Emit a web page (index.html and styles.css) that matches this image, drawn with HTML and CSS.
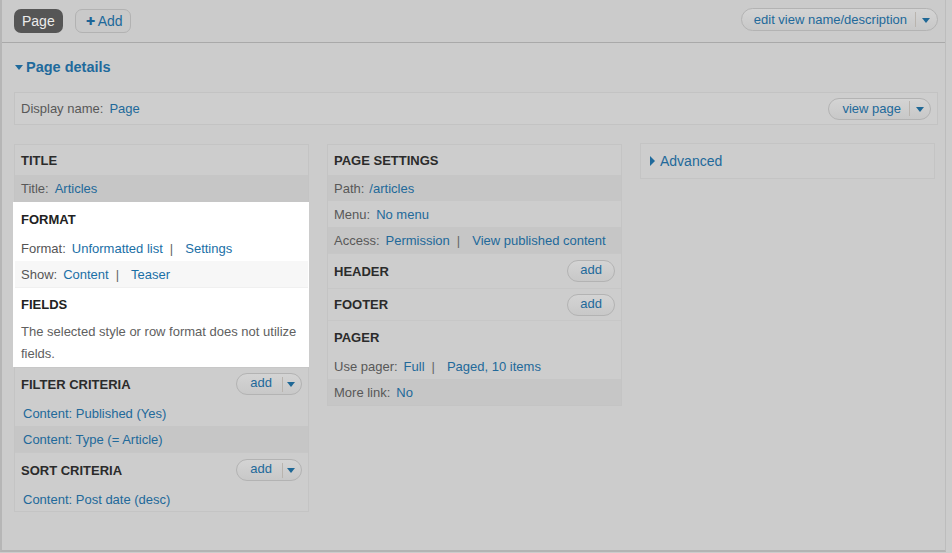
FILE: index.html
```html
<!DOCTYPE html>
<html>
<head>
<meta charset="utf-8">
<link rel="stylesheet" href="styles.css">
</head>
<body>
<div class="frame">
  <div class="topbar">
    <div class="tabs">
      <span class="tab-active">Page</span>
      <span class="tab-add"><span class="plus">✚</span>Add</span>
    </div>
    <span class="dropbtn wide"><span class="lbl">edit view name/description</span><span class="sep"></span><span class="arrow"></span></span>
  </div>

  <div class="content">
    <div class="details-title"><span class="tri-down"></span>Page details</div>

    <div class="display-bar">
      <span class="label">Display name:</span><a class="link">Page</a>
      <span class="dropbtn vp"><span class="lbl">view page</span><span class="sep"></span><span class="arrow"></span></span>
    </div>

    <div class="columns">
      <div class="panel col1">
        <div class="sec">
          <div class="hd h30">TITLE</div>
          <div class="row dark r27"><span class="label">Title:</span><a class="link">Articles</a></div>
        </div>
        <div class="hl">
          <div class="sec">
            <div class="hd">FORMAT</div>
            <div class="row"><span class="label">Format:</span><a class="link">Unformatted list</a><span class="pipe">|</span><a class="link">Settings</a></div>
            <div class="row alt"><span class="label">Show:</span><a class="link">Content</a><span class="pipe">|</span><a class="link">Teaser</a></div>
          </div>
          <div class="sec">
            <div class="hd">FIELDS</div>
            <div class="para">The selected style or row format does not utilize fields.</div>
          </div>
        </div>
        <div class="sec">
          <div class="hd">FILTER CRITERIA<span class="addbtn drop"><span class="lbl">add</span><span class="sep"></span><span class="arrow"></span></span></div>
          <div class="row ind"><a class="link">Content: Published (Yes)</a></div>
          <div class="row dark ind"><a class="link">Content: Type (= Article)</a></div>
        </div>
        <div class="sec">
          <div class="hd h34">SORT CRITERIA<span class="addbtn drop"><span class="lbl">add</span><span class="sep"></span><span class="arrow"></span></span></div>
          <div class="row ind last"><a class="link">Content: Post date (desc)</a></div>
        </div>
      </div>

      <div class="panel col2">
        <div class="sec">
          <div class="hd h30">PAGE SETTINGS</div>
          <div class="row dark"><span class="label sm">Path:</span><a class="link">/articles</a></div>
          <div class="row"><span class="label">Menu:</span><a class="link">No menu</a></div>
          <div class="row dark"><span class="label">Access:</span><a class="link">Permission</a><span class="pipe">|</span><a class="link">View published content</a></div>
        </div>
        <div class="sec">
          <div class="hd h34">HEADER<span class="addbtn"><span class="lbl">add</span></span></div>
        </div>
        <div class="sec">
          <div class="hd h31">FOOTER<span class="addbtn"><span class="lbl">add</span></span></div>
        </div>
        <div class="sec">
          <div class="hd">PAGER</div>
          <div class="row"><span class="label">Use pager:</span><a class="link">Full</a><span class="pipe">|</span><a class="link">Paged, 10 items</a></div>
          <div class="row dark"><span class="label">More link:</span><a class="link">No</a></div>
        </div>
      </div>

      <div class="col3">
        <div class="advanced"><span class="tri-right"></span>Advanced</div>
      </div>
    </div>
  </div>
</div>
</body>
</html>
```

FILE: styles.css
```css
* { box-sizing: border-box; }
html, body { margin: 0; padding: 0; }
body {
  width: 952px;
  height: 553px;
  background: #cccccc;
  font-family: "Liberation Sans", Arial, sans-serif;
  font-size: 13px;
  color: #575757;
  overflow: hidden;
}
.frame {
  width: 946px;
  height: 552px;
  border-left: 2px solid #b6b6b6;
  border-right: 1px solid #bdbdbd;
  border-bottom: 2px solid #b3b3b3;
  background: #cccccc;
}
.topbar {
  height: 43px;
  border-bottom: 1px solid #a9a9a9;
  display: flex;
  justify-content: space-between;
  align-items: flex-start;
  padding: 9px 7px 0 12px;
  background: #cbcbcb;
}
.tabs { display: flex; gap: 12px; }
.tab-active {
  display: inline-flex;
  align-items: center;
  height: 24px;
  padding: 0 8px;
  background: #565656;
  color: #ececec;
  border-radius: 7px;
  font-size: 14px;
}
.tab-add {
  display: inline-flex;
  align-items: center;
  height: 24px;
  padding: 0 7px 0 10px;
  border: 1px solid #b2b2b2;
  background: #c9c9c9;
  color: #20689a;
  border-radius: 7px;
  font-size: 14px;
}
.plus { font-size: 11px; margin-right: 3px; color: #1c6496; }

.dropbtn, .addbtn {
  display: inline-flex;
  align-items: center;
  border: 1px solid #b3b3b3;
  border-radius: 12px;
  background: linear-gradient(#d4d4d4, #c8c8c8);
  color: #22699a;
  font-size: 13px;
}
.dropbtn.wide { height: 23px; margin-top: -1px; padding: 0 0 0 12px; }
.dropbtn .sep, .addbtn .sep {
  width: 1px;
  height: 15px;
  background: #b9b4ae;
  margin-left: 8px;
}
.dropbtn .arrow, .addbtn .arrow {
  width: 0; height: 0;
  border-left: 4px solid transparent;
  border-right: 4px solid transparent;
  border-top: 5px solid #1f6896;
  margin: 1px 7px 0 6px;
}

.content { padding: 0 0 0 12px; }
.details-title {
  display: flex;
  align-items: center;
  height: 20px;
  margin-top: 14px;
  color: #1f6a9c;
  font-weight: bold;
  font-size: 14.5px;
}
.tri-down {
  width: 0; height: 0;
  border-left: 4px solid transparent;
  border-right: 4px solid transparent;
  border-top: 5px solid #1f6a9c;
  margin: 1px 3px 0 1px;
}
.display-bar {
  margin-top: 15px;
  width: 924px;
  height: 33px;
  border: 1px solid #c3c3c3;
  background: #cecece;
  display: flex;
  align-items: center;
  padding: 0 6px 0 6px;
}
.display-bar .label { margin-right: 6px; }
.dropbtn.vp { margin-left: auto; height: 22px; padding-left: 13px; }
.dropbtn.vp .arrow { margin-right: 6px; }

.link { color: #22699a; }
.label { color: #585858; margin-right: 6px; }
.label.sm { margin-right: 5px; }
.pipe { color: #666; margin: 0 12px 0 7px; }

.columns {
  display: grid;
  grid-template-columns: 295px 295px 295px;
  column-gap: 18px;
  margin-top: 19px;
  align-items: start;
}
.panel {
  border: 1px solid #c4c4c4;
  background: #cdcdcd;
}
.sec { border-top: 1px solid #c7c7c7; }
.sec:first-child { border-top: none; }
.hd {
  display: flex;
  align-items: center;
  justify-content: space-between;
  height: 32px;
  padding: 0 6px 0 6px;
  font-weight: bold;
  color: #2b2b2b;
  font-size: 13px;
}
.hd.h30 { height: 30px; }
.hd.h31 { height: 31px; }
.hd.h34 { height: 34px; }
.row {
  display: flex;
  align-items: center;
  height: 26px;
  padding: 0 6px;
  white-space: nowrap;
}
.row.r27 { height: 27px; }
.row.ind { padding-left: 8px; }
.row.dark { background: #c6c6c6; }
.row.last { height: 24px; }
.hl {
  background: #ffffff;
  margin: 0 -1px 0 -2px;
  padding: 1px 1px 0 2px;
}
.hl .sec { border-top-color: #f0f0f0; }
.hl .hd { color: #222; }
.hl .row.alt { background: #f7f7f7; }
.hl .label { color: #555; }
.hl .link { color: #1a6fa6; }
.para {
  padding: 1px 6px 2px 6px;
  line-height: 22px;
  color: #606060;
}
.addbtn {
  height: 22px;
  font-weight: normal;
  padding: 0 0 0 13px;
}
.addbtn .lbl { margin-top: -3px; }
.col2 .addbtn { padding: 0 12px 0 12px; }
.addbtn.drop .sep { margin-left: 10px; }
.addbtn.drop .arrow { margin: 1px 6px 0 4px; }

.advanced {
  height: 36px;
  border: 1px solid #c4c4c4;
  background: #cdcdcd;
  display: flex;
  align-items: center;
  padding-left: 9px;
  color: #22699a;
  font-size: 14px;
  margin-top: -1px;
}
.tri-right {
  width: 0; height: 0;
  border-top: 5px solid transparent;
  border-bottom: 5px solid transparent;
  border-left: 5px solid #1f6a9c;
  margin-right: 5px;
}
```
